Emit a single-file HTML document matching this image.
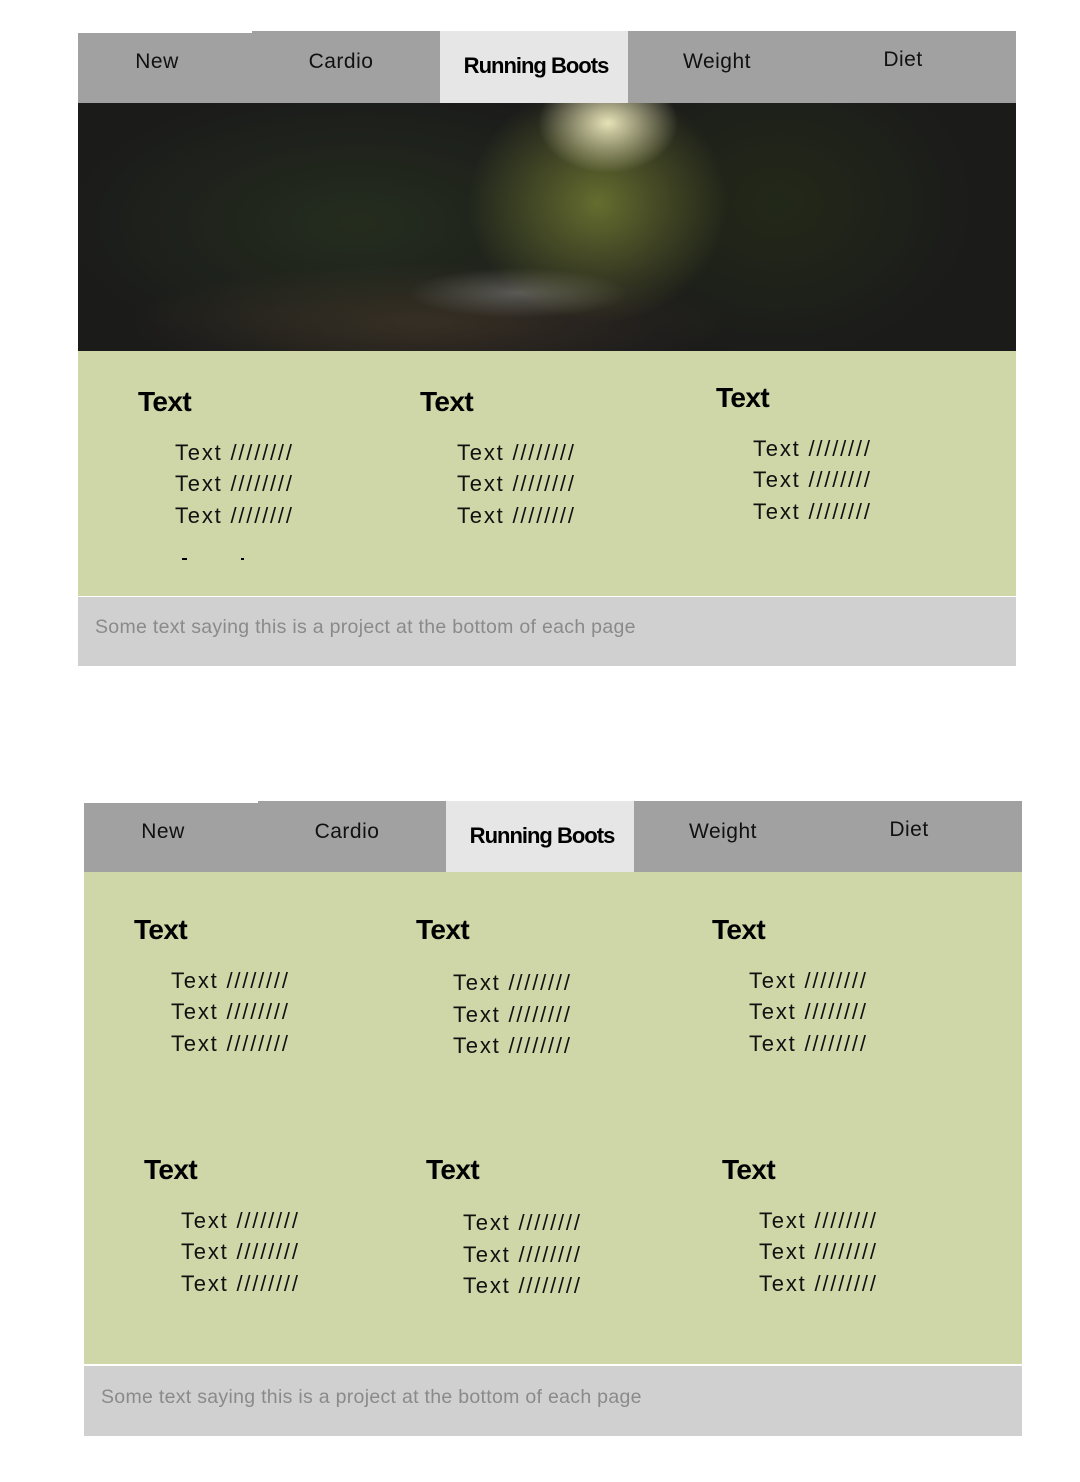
<!DOCTYPE html>
<html><head><meta charset="utf-8"><style>
html,body{margin:0;padding:0;width:1080px;height:1482px;background:#fff;overflow:hidden;font-family:"Liberation Sans",sans-serif;}
div{position:absolute;box-sizing:border-box;}
.nav{background:#a1a1a1;}
.act{background:#e6e6e6;}
.g{background:#cfd6a7;}
.f{background:#d0d0d0;}
.t{white-space:nowrap;color:#111;line-height:30px;height:30px;}
.n{font-size:21px;letter-spacing:.5px;transform:translateX(-50%);}
.nb{font-size:22px;font-weight:bold;letter-spacing:-1px;transform:translateX(-50%);color:#000;}
.h{font-size:28px;font-weight:bold;letter-spacing:-.6px;color:#000;}
.i{font-size:22px;letter-spacing:1.8px;}
.ft{font-size:19.5px;color:#8a8a8a;letter-spacing:.3px;}
</style></head><body>
<!-- top mock -->
<div class="nav" style="left:78px;top:33px;width:174px;height:70px"></div>
<div class="nav" style="left:252px;top:31px;width:188px;height:72px"></div>
<div class="act" style="left:440px;top:31px;width:188px;height:72px"></div>
<div class="nav" style="left:628px;top:31px;width:388px;height:72px"></div>
<div class="t n" style="left:157px;top:47px">New</div>
<div class="t n" style="left:341px;top:47px">Cardio</div>
<div class="t nb" style="left:536px;top:51px">Running Boots</div>
<div class="t n" style="left:717px;top:47px">Weight</div>
<div class="t n" style="left:903px;top:45px">Diet</div>
<div style="left:78px;top:103px;width:938px;height:248px;background:
radial-gradient(ellipse 70px 50px at 530px 20px,rgba(250,245,200,.9),rgba(240,230,160,0) 100%),
radial-gradient(ellipse 130px 120px at 520px 100px,rgba(150,160,60,.6),rgba(100,110,40,0) 100%),
radial-gradient(ellipse 110px 25px at 440px 190px,rgba(150,150,150,.45),rgba(80,80,80,0) 100%),
radial-gradient(ellipse 300px 60px at 350px 220px,rgba(80,62,45,.5),rgba(60,50,40,0) 100%),
radial-gradient(ellipse 300px 140px at 280px 120px,rgba(40,52,32,.7),rgba(30,35,25,0) 100%),
radial-gradient(ellipse 200px 160px at 700px 100px,rgba(38,46,24,.7),rgba(30,35,25,0) 100%),
#1b1b1a"></div>
<div class="g" style="left:78px;top:351px;width:938px;height:245px"></div>
<div class="f" style="left:78px;top:597px;width:938px;height:69px"></div>
<div style="left:182px;top:558px;width:5px;height:2px;background:#000"></div>
<div style="left:241px;top:558px;width:3px;height:2px;background:#000"></div>
<div class="t ft" style="left:95px;top:612px">Some text saying this is a project at the bottom of each page</div>

<div class="t h" style="left:138px;top:387px">Text</div>
<div class="t h" style="left:420px;top:387px">Text</div>
<div class="t h" style="left:716px;top:383px">Text</div>
<div class="t i" style="left:175px;top:438px">Text ////////</div>
<div class="t i" style="left:175px;top:469px">Text ////////</div>
<div class="t i" style="left:175px;top:501px">Text ////////</div>
<div class="t i" style="left:457px;top:438px">Text ////////</div>
<div class="t i" style="left:457px;top:469px">Text ////////</div>
<div class="t i" style="left:457px;top:501px">Text ////////</div>
<div class="t i" style="left:753px;top:434px">Text ////////</div>
<div class="t i" style="left:753px;top:465px">Text ////////</div>
<div class="t i" style="left:753px;top:497px">Text ////////</div>

<!-- bottom mock -->
<div class="nav" style="left:84px;top:803px;width:174px;height:69px"></div>
<div class="nav" style="left:258px;top:801px;width:188px;height:71px"></div>
<div class="act" style="left:446px;top:801px;width:188px;height:71px"></div>
<div class="nav" style="left:634px;top:801px;width:388px;height:71px"></div>
<div class="t n" style="left:163px;top:817px">New</div>
<div class="t n" style="left:347px;top:817px">Cardio</div>
<div class="t nb" style="left:542px;top:821px">Running Boots</div>
<div class="t n" style="left:723px;top:817px">Weight</div>
<div class="t n" style="left:909px;top:815px">Diet</div>
<div class="g" style="left:84px;top:872px;width:938px;height:492px"></div>
<div class="f" style="left:84px;top:1366px;width:938px;height:70px"></div>
<div class="t ft" style="left:101px;top:1382px">Some text saying this is a project at the bottom of each page</div>

<div class="t h" style="left:134px;top:915px">Text</div>
<div class="t h" style="left:416px;top:915px">Text</div>
<div class="t h" style="left:712px;top:915px">Text</div>
<div class="t i" style="left:171px;top:966px">Text ////////</div>
<div class="t i" style="left:171px;top:997px">Text ////////</div>
<div class="t i" style="left:171px;top:1029px">Text ////////</div>
<div class="t i" style="left:453px;top:968px">Text ////////</div>
<div class="t i" style="left:453px;top:1000px">Text ////////</div>
<div class="t i" style="left:453px;top:1031px">Text ////////</div>
<div class="t i" style="left:749px;top:966px">Text ////////</div>
<div class="t i" style="left:749px;top:997px">Text ////////</div>
<div class="t i" style="left:749px;top:1029px">Text ////////</div>

<div class="t h" style="left:144px;top:1155px">Text</div>
<div class="t h" style="left:426px;top:1155px">Text</div>
<div class="t h" style="left:722px;top:1155px">Text</div>
<div class="t i" style="left:181px;top:1206px">Text ////////</div>
<div class="t i" style="left:181px;top:1237px">Text ////////</div>
<div class="t i" style="left:181px;top:1269px">Text ////////</div>
<div class="t i" style="left:463px;top:1208px">Text ////////</div>
<div class="t i" style="left:463px;top:1240px">Text ////////</div>
<div class="t i" style="left:463px;top:1271px">Text ////////</div>
<div class="t i" style="left:759px;top:1206px">Text ////////</div>
<div class="t i" style="left:759px;top:1237px">Text ////////</div>
<div class="t i" style="left:759px;top:1269px">Text ////////</div>
</body></html>
